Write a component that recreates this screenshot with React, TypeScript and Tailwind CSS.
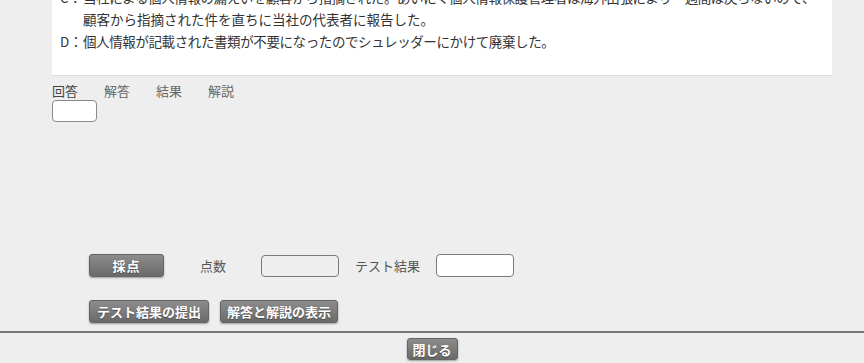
const font = { fontFamily: '"Noto Sans CJK JP", "Noto Sans", sans-serif' }

function GrayButton({ label, className }: { label: string; className: string }) {
  return (
    <button
      type="button"
      className={`flex items-center justify-center rounded-[3px] border border-[#646464] bg-[linear-gradient(180deg,#8c8c8c_0%,#6a6a6a_100%)] text-[13px] font-bold leading-none text-white shadow-[0_1px_2px_rgba(0,0,0,0.35)] [text-shadow:0_1px_1px_rgba(0,0,0,0.35)] ${className}`}
    >
      {label}
    </button>
  )
}

export default function App() {
  return (
    <div className="flex h-[363px] w-full flex-col overflow-hidden bg-[#eeeeee]" style={font}>
      <div className="pl-[52px]">
        <div className="-mt-[14px] w-[780px] border-b border-[#dddddd] bg-white pb-[23px] pl-[8px] text-[13.5px] leading-[22px] text-[#333]">
          <div className="flex">
            <span className="w-[23px] shrink-0">C：</span>
            <span className="whitespace-nowrap tracking-[-0.4px]">当社による個人情報の漏えいを顧客から指摘された。あいにく個人情報保護管理者は海外出張により一週間は戻らないので、</span>
          </div>
          <div className="pl-[23px]">顧客から指摘された件を直ちに当社の代表者に報告した。</div>
          <div className="flex">
            <span className="w-[23px] shrink-0">D：</span>
            <span className="tracking-[-0.4px]">個人情報が記載された書類が不要になったのでシュレッダーにかけて廃棄した。</span>
          </div>
        </div>

        <div className="mt-[7px] flex gap-[26px] text-[13px] leading-[16px] text-[#666]">
          <span className="text-[#444]">回答</span>
          <span>解答</span>
          <span>結果</span>
          <span>解説</span>
        </div>
        <div className="mt-[1px] h-[22px] w-[45px] rounded-[4px] border border-[#8a8a8a] bg-white" />
      </div>

      <div className="mt-[132px] flex items-center pl-[89px] text-[13px] text-[#555]">
        <GrayButton label="採点" className="h-[23px] w-[75px] tracking-[1px]" />
        <span className="ml-[36px]">点数</span>
        <div className="ml-[35px] h-[22px] w-[78px] rounded-[4px] border border-[#7a7a7a] bg-[#eeeeee]" />
        <span className="ml-[16px]">テスト結果</span>
        <div className="ml-[16px] h-[23px] w-[78px] rounded-[4px] border border-[#7a7a7a] bg-white" />
      </div>

      <div className="mt-[23px] flex gap-[11px] pl-[89px]">
        <GrayButton label="テスト結果の提出" className="h-[23px] w-[120px]" />
        <GrayButton label="解答と解説の表示" className="h-[23px] w-[118px]" />
      </div>

      <div className="mt-[8px] flex justify-center border-t-2 border-[#777] pt-[5px]">
        <GrayButton label="閉じる" className="h-[22px] w-[51px]" />
      </div>
    </div>
  )
}
